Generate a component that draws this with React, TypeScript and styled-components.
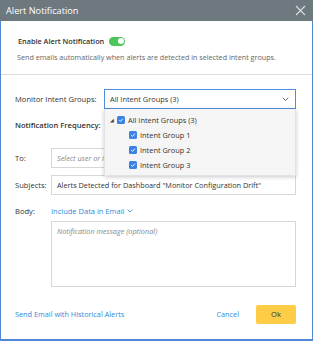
import styled, { createGlobalStyle } from 'styled-components';

const GlobalStyle = createGlobalStyle`
  html, body {
    margin: 0;
    padding: 0;
    background: #ffffff;
  }
  * {
    box-sizing: border-box;
  }
`;

const Dialog = styled.div`
  width: 313px;
  height: 341px;
  display: flex;
  flex-direction: column;
  font-family: 'Open Sans', 'Liberation Sans', sans-serif;
  color: #333;
  background: #fff;
  border: 1px solid #4f86d6;
  border-top: 0;
  border-bottom-width: 2px;
`;

const Header = styled.div`
  height: 21px;
  margin: 0 -1px;
  background: #6d787f;
  color: #fff;
  display: flex;
  align-items: center;
  justify-content: space-between;
  padding: 0 6px 0 6px;
  font-size: 9.2px;
`;

const CloseButton = styled.span`
  display: flex;
  align-items: center;
  color: #d8dcdf;
  margin-right: 1px;
`;

const EnableSection = styled.div`
  padding: 15px 0 12px 16px;
  border-bottom: 1px solid #dcdcdc;
`;

const EnableRow = styled.div`
  display: flex;
  align-items: center;
  gap: 5px;
  padding-left: 1px;
  font-size: 7.3px;
  font-weight: 600;
  color: #333;
`;

const Toggle = styled.span<{ on?: boolean }>`
  width: 16px;
  height: 9px;
  border-radius: 5px;
  background: ${(p) => (p.on ? '#4cc65a' : '#ccc')};
  position: relative;
  display: inline-block;
  &::after {
    content: '';
    position: absolute;
    top: 1.5px;
    right: ${(p) => (p.on ? '1.5px' : '8.5px')};
    width: 6px;
    height: 6px;
    border-radius: 50%;
    background: #fff;
  }
`;

const Hint = styled.div`
  margin-top: 6px;
  font-size: 7.2px;
  color: #666;
`;

const Form = styled.div`
  padding: 14px 16px 0 14px;
  display: flex;
  flex-direction: column;
`;

const Row = styled.div<{ top?: number }>`
  display: flex;
  align-items: center;
  margin-top: ${(p) => p.top ?? 0}px;
  position: relative;
`;

const Label = styled.div<{ width: number; bold?: boolean }>`
  width: ${(p) => p.width}px;
  flex-shrink: 0;
  white-space: nowrap;
  font-size: 7.6px;
  font-weight: ${(p) => (p.bold ? 600 : 400)};
  color: #333;
`;

const SelectBox = styled.div`
  flex: 1;
  height: 20px;
  border: 1px solid #4f8fe0;
  display: flex;
  align-items: center;
  justify-content: space-between;
  padding: 0 6px 0 5px;
  font-size: 7.4px;
  color: #333;
  background: #fff;
`;

const Input = styled.div<{ placeholder?: boolean }>`
  flex: 1;
  height: 20px;
  border: 1px solid #d6d6d6;
  display: flex;
  align-items: center;
  padding: 0 5px;
  font-size: 7.3px;
  white-space: nowrap;
  overflow: hidden;
  color: ${(p) => (p.placeholder ? '#888' : '#333')};
  font-style: ${(p) => (p.placeholder ? 'italic' : 'normal')};
`;

const TextArea = styled.div`
  margin-left: 36px;
  margin-top: 5px;
  height: 66px;
  border: 1px solid #d6d6d6;
  padding: 4px 5px;
  font-size: 7.3px;
  font-style: italic;
  color: #888;
`;

const LinkText = styled.span`
  color: #2f8ad8;
  font-size: 7.5px;
  display: inline-flex;
  align-items: center;
  gap: 3px;
  cursor: pointer;
`;

const Dropdown = styled.div`
  position: absolute;
  left: 89px;
  right: 0;
  top: 20px;
  height: 67px;
  background: #f5f5f5;
  box-shadow: 0 1px 4px rgba(0, 0, 0, 0.22);
  border: 1px solid #e2e2e2;
  border-top: 0;
  padding: 4px 0 0 4px;
  z-index: 2;
`;

const TreeItem = styled.div<{ level: number }>`
  display: flex;
  align-items: center;
  height: 14.9px;
  padding-left: ${(p) => (p.level === 0 ? 0 : 20)}px;
  font-size: 7.4px;
  color: #333;
  gap: 3px;
`;

const Caret = styled.span`
  width: 5px;
  display: inline-flex;
  justify-content: center;
  font-size: 5px;
  color: #444;
`;

const CheckBox = styled.span`
  width: 8px;
  height: 8px;
  border-radius: 1.5px;
  background: #3b82e6;
  display: inline-flex;
  align-items: center;
  justify-content: center;
`;

const Footer = styled.div`
  margin-top: auto;
  height: 45px;
  padding: 0 16px 5px 14px;
  display: flex;
  align-items: center;
`;

const FooterLink = styled.span<{ grow?: boolean }>`
  color: #2f8ad8;
  font-size: 7.3px;
  flex: ${(p) => (p.grow ? 1 : 'none')};
`;

const OkButton = styled.button`
  width: 40px;
  height: 19px;
  margin-left: 17px;
  border: 0;
  border-radius: 2px;
  background: #ffcc47;
  color: #333;
  font-family: inherit;
  font-size: 7.6px;
  padding: 0;
`;

const Check = () => (
  <CheckBox>
    <svg width="6" height="6" viewBox="0 0 10 10">
      <path d="M2 5.2 L4.2 7.3 L8.2 2.8" fill="none" stroke="#fff" strokeWidth="1.6" />
    </svg>
  </CheckBox>
);

const Chevron = ({ color, size }: { color: string; size: number }) => (
  <svg width={size} height={size * 0.6} viewBox="0 0 10 6">
    <path d="M1 1 L5 5 L9 1" fill="none" stroke={color} strokeWidth="1.3" />
  </svg>
);

const groups = ['Intent Group 1', 'Intent Group 2', 'Intent Group 3'];

export default function App() {
  return (
    <Dialog>
      <GlobalStyle />
      <Header>
        <span>Alert Notification</span>
        <CloseButton>
          <svg width="11" height="11" viewBox="0 0 11 11">
            <path d="M1 1 L10 10 M10 1 L1 10" stroke="currentColor" strokeWidth="1.2" />
          </svg>
        </CloseButton>
      </Header>
      <EnableSection>
        <EnableRow>
          Enable Alert Notification
          <Toggle on />
        </EnableRow>
        <Hint>Send emails automatically when alerts are detected in selected intent groups.</Hint>
      </EnableSection>
      <Form>
        <Row>
          <Label width={89}>Monitor Intent Groups:</Label>
          <SelectBox>
            All Intent Groups (3)
            <Chevron color="#555" size={7} />
          </SelectBox>
          <Dropdown>
            <TreeItem level={0}>
              <Caret>◢</Caret>
              <Check />
              All Intent Groups (3)
            </TreeItem>
            {groups.map((g) => (
              <TreeItem key={g} level={1}>
                <Check />
                {g}
              </TreeItem>
            ))}
          </Dropdown>
        </Row>
        <Row top={11}>
          <Label width={89} bold>
            Notification Frequency:
          </Label>
        </Row>
        <Row top={18}>
          <Label width={36}>To:</Label>
          <Input placeholder>Select user or i</Input>
        </Row>
        <Row top={7}>
          <Label width={36}>Subjects:</Label>
          <Input>Alerts Detected for Dashboard "Monitor Configuration Drift"</Input>
        </Row>
        <Row top={11}>
          <Label width={36}>Body:</Label>
          <LinkText>
            Include Data in Email
            <Chevron color="#2f8ad8" size={6} />
          </LinkText>
        </Row>
        <TextArea>Notification message (optional)</TextArea>
      </Form>
      <Footer>
        <FooterLink grow>Send Email with Historical Alerts</FooterLink>
        <FooterLink>Cancel</FooterLink>
        <OkButton>Ok</OkButton>
      </Footer>
    </Dialog>
  );
}
